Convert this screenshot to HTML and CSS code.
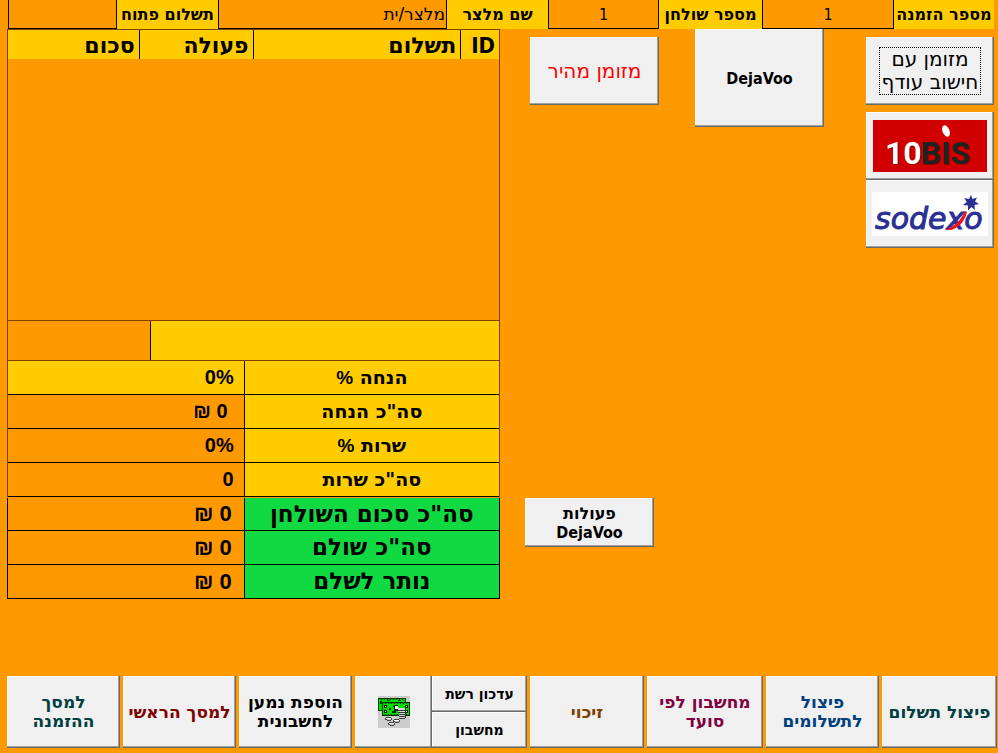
FILE: index.html
```html
<!DOCTYPE html>
<html lang="he" dir="rtl">
<head>
<meta charset="utf-8">
<meta name="viewport" content="width=device-width, initial-scale=1">
<title>תשלום הזמנה</title>
<link rel="stylesheet" href="styles.css">
</head>
<body>
<header class="topbar">
  <label class="field-label" for="order">מספר הזמנה</label>
  <input class="field" id="order" value="1" readonly>
  <label class="field-label" for="table-no">מספר שולחן</label>
  <input class="field" id="table-no" value="1" readonly>
  <label class="field-label" for="waiter">שם מלצר</label>
  <input class="field field-start" id="waiter" value="מלצר/ית" readonly>
  <label class="field-label" for="open-payment">תשלום פתוח</label>
  <input class="field" id="open-payment" value="" readonly>
</header>

<main class="main">
  <section class="methods">
    <div class="method-col method-col-inset">
      <button class="btn btn-cash"><span class="focus-ring">מזומן עם<br>חישוב עודף</span></button>
      <div class="cards">
        <button class="btn btn-card" aria-label="10bis">
          <svg class="logo" width="114" height="52" viewBox="0 0 114 52" direction="ltr">
            <rect width="114" height="52" fill="#d00000"/>
            <g class="tenbis">
              <text x="12" y="44" fill="#fff">10</text>
              <text x="48" y="44" fill="#1c241f">BIS</text>
            </g>
            <ellipse cx="73" cy="11" rx="3.500" ry="6" fill="#fff" transform="rotate(-22 73 11)"/>
          </svg>
        </button>
        <button class="btn btn-card" aria-label="sodexo">
          <svg class="logo" width="116" height="44" viewBox="0 0 116 44" direction="ltr">
            <rect width="116" height="44" fill="#fff"/>
            <text class="sodexo" x="3" y="37">sodexo</text>
            <path d="M73 38C83 34 89 28 93 19L95 20C93 29 87 36 79 38Z" fill="#e8141e"/>
            <path d="M99 3l1.500 4 4.500-1.500-2 4 4 2.500-4.500 1 .5 5-3.500-3-3.500 3.500v-5l-5-.5 3.800-3-2.500-4 4.700 1z" fill="#2a3192"/>
          </svg>
        </button>
      </div>
    </div>
    <div class="method-col method-col-mid">
      <button class="btn btn-terminal"><span class="latin">DejaVoo</span></button>
    </div>
    <div class="method-col method-col-inset method-col-last">
      <button class="btn btn-quick">מזומן מהיר</button>
      <button class="btn btn-actions">פעולות<br><span class="latin">DejaVoo</span></button>
    </div>
  </section>

  <section class="ledger">
    <div class="payments">
      <table class="payments-table">
        <colgroup><col class="c-id"><col class="c-pay"><col class="c-act"><col class="c-sum"></colgroup>
        <thead><tr><th><span class="latin">ID</span></th><th>תשלום</th><th>פעולה</th><th>סכום</th></tr></thead>
        <tbody></tbody>
      </table>
    </div>
    <div class="status"><div class="status-note"></div><div class="status-sum"></div></div>
    <table class="summary">
      <colgroup><col class="c-label"><col class="c-value"></colgroup>
      <tbody>
        <tr class="is-input"><th>הנחה <span class="percent">%</span></th><td><bdi dir="ltr">0%</bdi></td></tr>
        <tr><th>סה"כ הנחה</th><td class="money"><bdi dir="ltr">₪ 0</bdi></td></tr>
        <tr><th>שרות <span class="percent">%</span></th><td><bdi dir="ltr">0%</bdi></td></tr>
        <tr><th>סה"כ שרות</th><td>0</td></tr>
      </tbody>
    </table>
    <table class="summary totals">
      <colgroup><col class="c-label"><col class="c-value"></colgroup>
      <tbody>
        <tr><th>סה"כ סכום השולחן</th><td><bdi dir="ltr">₪ 0</bdi></td></tr>
        <tr><th>סה"כ שולם</th><td><bdi dir="ltr">₪ 0</bdi></td></tr>
        <tr><th>נותר לשלם</th><td><bdi dir="ltr">₪ 0</bdi></td></tr>
      </tbody>
    </table>
  </section>
</main>

<footer class="actions">
  <button class="btn c-green">פיצול תשלום</button>
  <button class="btn c-blue">פיצול<br>לתשלומים</button>
  <button class="btn c-plum">מחשבון לפי<br>סועד</button>
  <button class="btn c-brown">זיכוי</button>
  <div class="tools">
    <div class="tools-stack">
      <button class="btn btn-small">עדכון רשת</button>
      <button class="btn btn-small">מחשבון</button>
    </div>
    <button class="btn" aria-label="מזומן">
      <svg width="32" height="32" viewBox="0 0 32 32" shape-rendering="crispEdges">
        <rect width="32" height="32" fill="#ccc"/>
        <rect y="2" width="28" height="13" fill="#003c00"/>
        <path d="M1 4h26v10H1z" fill="#00e000"/>
        <path d="M1 3h26" stroke="#00c000" stroke-dasharray="2 1"/>
        <path d="M2 5h2v3H2zM9 4h3v1H9zM20 4h3v1h-3z" fill="#003c00"/>
        <rect x="4" y="6" width="28" height="14" fill="#003000"/>
        <path d="M5 8h26v10H5z" fill="#00e000"/>
        <path d="M5 7h26M5 18h26" stroke="#00c000" stroke-dasharray="2 1"/>
        <path d="M6 9h3v3H6zM27 9h3v3h-3zM6 14h3v3H6zM27 14h3v3h-3zM11 12h2v2h-2zM15 10h1v1h-1zM16 9h4v6h-4zM14 15h4v2h-4z" fill="#002000"/>
        <path d="M7 10h1v1H7zM28 10h1v1h-1zM7 15h1v1H7zM28 15h1v1h-1zM17 10h3v3h-3z" fill="#fff"/>
        <path d="M20 12h7v10h-6v-5h-1z" fill="#d8d8d8"/>
        <path d="M20 14h7v1h-7zM20 16h7v1h-7zM21 18h6v1h-6zM21 20h6v1h-6zM21 22h6v1h-6zM27 12h1v10h-1z" fill="#333"/>
        <path d="M8 21h5v1h1v2h-1v1H9v-1H7v-2h1zM16 23h5v1h1v2h-1v1h-4v-1h-2v-2h1zM11 26h5v1h1v2h-1v1h-4v-1h-2v-2h1z" fill="#444"/>
        <path d="M8 22h5v1H8zM16 24h5v1h-5zM11 27h5v1h-5z" fill="#fff"/>
        <path d="M9 23h4v1H9zM17 25h4v1h-4zM12 28h4v1h-4z" fill="#bbb"/>
      </svg>
    </button>
  </div>
  <button class="btn">הוספת נמען<br>לחשבונית</button>
  <button class="btn c-red">למסך הראשי</button>
  <button class="btn c-teal">למסך<br>ההזמנה</button>
</footer>
</body>
</html>
```
FILE: styles.css
```css
:root {
  --orange: #ff9900;
  --yellow: #ffcc00;
  --green: #11d941;
  --brown: #804000;
  --ui: "DejaVu Sans", sans-serif;
  --latin: "DejaVu Sans Condensed", "DejaVu Sans", sans-serif;
  --digits: "Liberation Sans", sans-serif;
}

* { box-sizing: border-box; }

body {
  margin: 0;
  min-height: 100vh;
  display: flex;
  flex-direction: column;
  background: var(--orange);
  color: #000;
  font-family: var(--ui);
  font-size: 16px;
}

.latin { font-family: var(--latin); }
.percent { font-family: var(--digits); }

/* Order details */
.topbar {
  display: grid;
  grid-template-columns:
    minmax(0, 100fr) minmax(0, 132fr) minmax(0, 103fr) minmax(0, 111fr)
    minmax(0, 101fr) minmax(0, 229fr) minmax(0, 101fr) minmax(0, 109fr);
  height: 29px;
  padding: 0 4px 0 8px;
}

.field-label {
  background: var(--yellow);
  font-weight: bold;
  line-height: 29px;
  text-align: center;
  white-space: nowrap;
}

.field {
  width: 100%;
  min-width: 0;
  height: 29px;
  margin: 0;
  padding: 0 1px;
  border: 1px solid #000;
  border-top: 0;
  border-radius: 0;
  background: var(--orange);
  color: #000;
  font-family: var(--latin);
  font-size: 16px;
  text-align: center;
}

.field-start { font-family: var(--ui); font-size: 17px; text-align: start; }

/* Raised buttons */
.btn {
  margin: 0;
  padding: 0 4px;
  border: 0;
  border-radius: 0;
  background: #f0f0f0;
  box-shadow: inset -1px -1px #696969, inset -2px -2px #a0a0a0, inset 1px 1px #fff;
  color: #000;
  font-family: var(--ui);
  font-size: 16px;
  font-weight: bold;
  line-height: 19px;
}

.btn svg { display: block; margin: 0 auto; }

/* Middle area */
.main {
  display: grid;
  grid-template-columns: minmax(0, 494fr) minmax(0, 493fr);
  padding: 0 4px 0 7px;
}

.methods {
  display: grid;
  grid-template-columns: minmax(0, 128fr) minmax(0, 135fr) minmax(0, 134fr);
  column-gap: 36px;
  padding-left: 25px;
}

.method-col { display: flex; flex-direction: column; }
.method-col-inset { padding-top: 8px; gap: 7px; }
.method-col-mid { padding-right: 6px; }
.method-col-last { justify-content: space-between; padding-bottom: 52px; }
.method-col-last .btn-quick { margin-left: 5px; }
.method-col-last .btn-actions { margin-right: 5px; }

.btn-cash, .btn-quick { height: 68px; font-size: 20px; font-weight: normal; line-height: 23px; }
.btn-quick { color: #f00; }
.focus-ring { display: inline-block; padding: 0 2px; border: 1px dotted #000; white-space: nowrap; }
.btn-terminal { height: 98px; }
.btn-actions { height: 49px; }

.cards { display: flex; flex-direction: column; }
.btn-card { height: 68px; }

.tenbis { font-family: Roboto, sans-serif; font-size: 32px; font-weight: bold; filter: drop-shadow(1px 1px 0 #8c0000); }
.sodexo { font-family: "DejaVu Sans", sans-serif; font-size: 30px; font-style: italic; font-weight: normal; fill: #2a3192; stroke: #2a3192; stroke-width: 1px; }

/* Payments list and totals */
.ledger { display: flex; flex-direction: column; }
.payments { height: 291px; border: 1px solid var(--brown); border-bottom: 0; }

table { width: 100%; border-collapse: collapse; table-layout: fixed; }
th, td { padding: 0; }

.payments-table { border-collapse: separate; border-spacing: 0; }
.payments-table th {
  height: 29px;
  padding: 2px 4px 0;
  background: var(--yellow);
  font-size: 22px;
  line-height: 27px;
  text-align: start;
}
.payments-table th + th { border-right: 1px solid #000; }
.c-id { width: 7.7%; }
.c-pay { width: 42.3%; }
.c-act { width: 23.2%; }
.c-sum { width: 26.8%; }

.status {
  display: grid;
  grid-template-columns: minmax(0, 350fr) minmax(0, 143fr);
  height: 41px;
  border: 1px solid var(--brown);
}
.status-note { background: var(--yellow); border-left: 1px solid #000; }

.summary { border-collapse: separate; border-spacing: 0; border: solid var(--brown); border-width: 0 1px; }
.summary th, .summary td { height: 34px; border-bottom: 1px solid #000; line-height: 33px; }
.summary th { background: var(--yellow); border-left: 1px solid #000; font-size: 19px; text-align: center; }
.summary td { padding-right: 10px; font-family: var(--digits); font-size: 20px; font-weight: bold; text-align: start; }
.summary .money { padding-right: 16px; }
.summary .is-input td { background: var(--yellow); }
.c-label { width: 52%; }
.c-value { width: 48%; }

.totals { margin-top: 1px; border-color: #000; }
.totals th { background: var(--green); font-size: 23px; }
.totals td { padding-right: 12px; font-size: 22px; }
.totals tr:first-child th, .totals tr:first-child td { height: 33px; line-height: 32px; }

/* Bottom actions */
.actions {
  display: grid;
  grid-template-columns:
    minmax(0, 115fr) minmax(0, 113fr) minmax(0, 116fr) minmax(0, 114fr)
    minmax(0, 172fr) minmax(0, 113fr) minmax(0, 113fr) minmax(0, 113fr);
  column-gap: 3px;
  height: 72px;
  margin-top: auto;
  margin-bottom: 5px;
  padding: 0 1px 0 7px;
}
.actions .btn { font-size: 17px; }
.tools { display: grid; grid-template-columns: minmax(0, 95fr) minmax(0, 77fr); }
.tools-stack { display: grid; grid-template-rows: 1fr 1fr; }
.actions .btn-small { font-size: 14px; }

.c-green { color: #004040; }
.c-blue { color: #004080; }
.c-plum { color: #800040; }
.c-brown { color: #804000; }
.c-red { color: #800000; }
.c-teal { color: #004040; }
```
